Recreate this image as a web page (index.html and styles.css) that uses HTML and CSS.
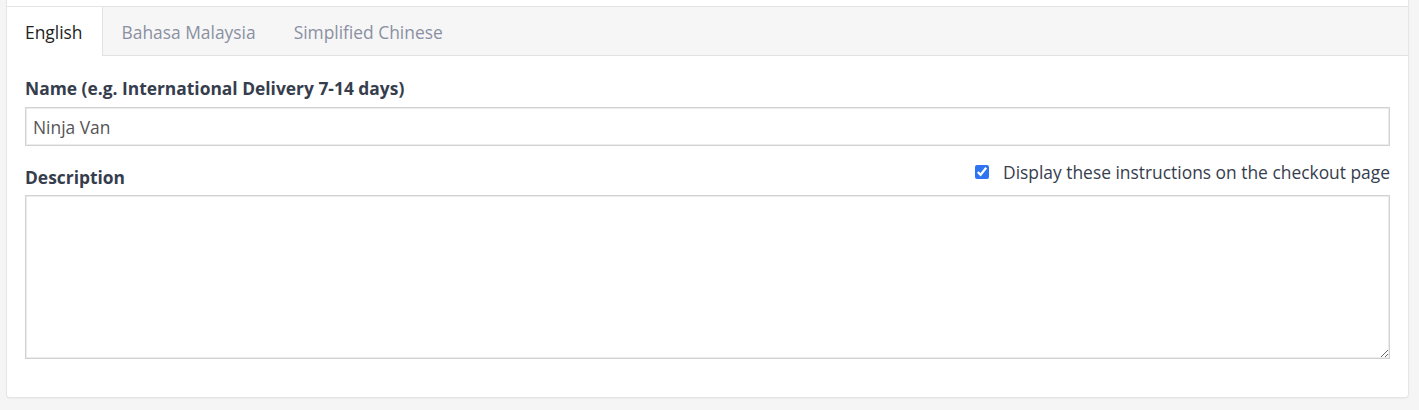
FILE: index.html
```html
<!DOCTYPE html>
<html lang="en">
<head>
<meta charset="utf-8">
<title>Shipping method</title>
<link rel="stylesheet" href="styles.css">
</head>
<body>
<div class="card">
  <nav class="tabs">
    <span class="tab active">English</span>
    <span class="tab">Bahasa Malaysia</span>
    <span class="tab">Simplified Chinese</span>
  </nav>
  <div class="body">
    <label class="label" for="name">Name (e.g. International Delivery 7-14 days)</label>
    <input class="input" id="name" type="text" value="Ninja Van">
    <div class="desc-row">
      <label class="label desc-label" for="desc">Description</label>
      <label class="check"><input type="checkbox" checked><span>Display these instructions on the checkout page</span></label>
    </div>
    <textarea class="textarea" id="desc"></textarea>
  </div>
</div>
</body>
</html>
```
FILE: styles.css
```css
html, body {
  margin: 0;
  padding: 0;
}
body {
  background: #f5f5f5;
  font-family: "Open Sans", "Liberation Sans", sans-serif;
  font-size: 17.4px;
  color: #363d4d;
  height: 410px;
}
.card {
  margin-left: 6px;
  width: 1401px;
  padding-top: 6px;
  background: #fff;
  border: 1px solid #e6e6e6;
  border-top: none;
  border-radius: 0 0 4px 4px;
  box-shadow: 0 1px 1px rgba(0,0,0,0.04);
}
.tabs {
  display: flex;
  height: 48px;
  background: #f6f6f6;
  border-top: 1px solid #e4e4e4;
  border-bottom: 1px solid #e2e2e2;
}
.tab {
  display: flex;
  align-items: center;
  padding: 1px 19px 0 19px;
  color: #8a90a2;
  line-height: 24px;
}
.tab.active {
  background: #fff;
  color: #222;
  padding: 1px 19px 0 18px;
  border-right: 1px solid #e2e2e2;
  margin-bottom: -1px;
}
.body {
  padding: 20px 18px 38px 18px;
}
.label {
  display: block;
  font-weight: 700;
  line-height: 24px;
  color: #363d4d;
}
.input {
  display: block;
  box-sizing: border-box;
  width: 100%;
  height: 39px;
  margin-top: 7px;
  padding: 0 7px;
  border: 1px solid #d2d2d2;
  box-shadow: inset 0 0 0 1px #ececec;
  font-family: inherit;
  font-size: 17.4px;
  color: #555;
  outline: none;
}
.desc-row {
  display: flex;
  justify-content: space-between;
  align-items: flex-start;
  margin-top: 14px;
}
.desc-label {
  margin-top: 5px;
}
.check {
  display: flex;
  align-items: center;
  gap: 14px;
  line-height: 24px;
  color: #363d4d;
}
.check input {
  margin: 0;
  width: 14px;
  height: 14px;
  accent-color: #2f74f0;
}
.textarea {
  display: block;
  box-sizing: border-box;
  width: 100%;
  height: 164px;
  margin-top: 6px;
  border: 1px solid #d2d2d2;
  box-shadow: inset 0 0 0 1px #ececec;
  font-family: inherit;
  font-size: 17.4px;
  outline: none;
}
```
